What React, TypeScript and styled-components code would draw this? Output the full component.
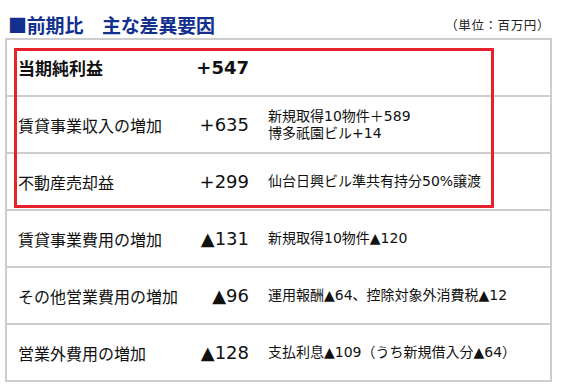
import React from 'react';
import styled, { createGlobalStyle } from 'styled-components';

const GlobalStyle = createGlobalStyle`
  html, body {
    margin: 0;
    padding: 0;
    background: #ffffff;
  }
  body {
    font-family: 'DejaVu Sans', 'Noto Sans CJK JP', sans-serif;
    color: #111111;
  }
`;

const Page = styled.div`
  width: 564px;
  height: 390px;
  padding: 6px 12px 0 5px;
  box-sizing: border-box;
`;

const Header = styled.div`
  display: flex;
  justify-content: space-between;
  align-items: flex-end;
  height: 32px;
  padding-left: 3px;
`;

const Title = styled.h2`
  margin: 0;
  font-family: 'Noto Sans CJK JP', sans-serif;
  font-size: 19px;
  font-weight: 700;
  color: #13308f;
  line-height: 26px;
  letter-spacing: -0.2px;
`;

const Unit = styled.span`
  font-family: 'Noto Sans CJK JP', sans-serif;
  font-size: 12.5px;
  color: #222222;
  margin-right: 2px;
  margin-bottom: 5px;
  line-height: 16px;
  letter-spacing: 0.6px;
`;

const Table = styled.div`
  position: relative;
  width: 547px;
  border: 2px solid #cdcdcd;
  border-bottom: none;
  box-sizing: border-box;
`;

const Row = styled.div`
  display: grid;
  grid-template-columns: 170px 61px 1fr;
  align-items: center;
  height: 55px;
  padding-left: 11px;
  border-bottom: 2px solid #cdcdcd;
`;

const Label = styled.div<{ $bold?: boolean }>`
  font-size: ${(p) => (p.$bold ? '17px' : '16px')};
  font-weight: ${(p) => (p.$bold ? 700 : 400)};
  white-space: nowrap;
`;

const Amount = styled.div<{ $bold?: boolean }>`
  font-size: 18px;
  font-weight: ${(p) => (p.$bold ? 700 : 400)};
  text-align: right;
  white-space: nowrap;
`;

const Note = styled.div`
  padding-left: 19px;
  font-size: 14px;
  line-height: 17px;
  white-space: nowrap;
`;

const Highlight = styled.div`
  position: absolute;
  left: 7px;
  top: 8px;
  width: 480px;
  height: 160px;
  border: 3px solid #e8202a;
  box-sizing: border-box;
  pointer-events: none;
`;

type Item = {
  label: string;
  amount: string;
  note?: React.ReactNode;
  bold?: boolean;
};

const items: Item[] = [
  { label: '当期純利益', amount: '+547', bold: true },
  {
    label: '賃貸事業収入の増加',
    amount: '+635',
    note: (
      <>
        新規取得10物件＋589
        <br />
        博多祇園ビル+14
      </>
    ),
  },
  { label: '不動産売却益', amount: '+299', note: '仙台日興ビル準共有持分50%譲渡' },
  { label: '賃貸事業費用の増加', amount: '▲131', note: '新規取得10物件▲120' },
  {
    label: 'その他営業費用の増加',
    amount: '▲96',
    note: '運用報酬▲64、控除対象外消費税▲12',
  },
  {
    label: '営業外費用の増加',
    amount: '▲128',
    note: '支払利息▲109（うち新規借入分▲64）',
  },
];

export default function App() {
  return (
    <Page>
      <GlobalStyle />
      <Header>
        <Title>■前期比　主な差異要因</Title>
        <Unit>（単位：百万円）</Unit>
      </Header>
      <Table>
        {items.map((it) => (
          <Row key={it.label}>
            <Label $bold={it.bold}>{it.label}</Label>
            <Amount $bold={it.bold}>{it.amount}</Amount>
            <Note>{it.note}</Note>
          </Row>
        ))}
        <Highlight />
      </Table>
    </Page>
  );
}
